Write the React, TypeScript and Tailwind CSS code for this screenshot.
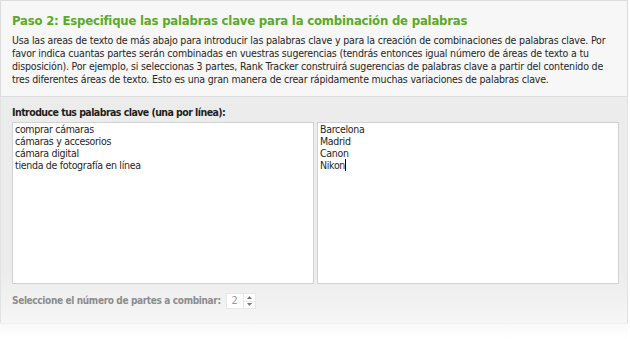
import React from "react";

export default function App() {
  return (
    <div className="w-[630px] h-[339px] overflow-hidden bg-white">
      <div className="w-[628px] h-[339px] flex flex-col text-[#262626] font-['DejaVu_Sans_Condensed','DejaVu_Sans',sans-serif]">
        <div className="h-[97px] shrink-0 bg-[#f7f7f7] border border-[#dcdcdc] pl-[11px] pt-[11px]">
          <div className="text-[13px] font-bold text-[#5aab27] leading-[18px] tracking-[-0.2px] whitespace-nowrap">
            Paso 2: Especifique las palabras clave para la combinación de palabras
          </div>
          <div className="mt-[4px] text-[10.5px] leading-[13px] tracking-[-0.18px] whitespace-nowrap">
            <div>Usa las areas de texto de más abajo para introducir las palabras clave y para la creación de combinaciones de palabras clave. Por</div>
            <div>favor indica cuantas partes serán combinadas en vuestras sugerencias (tendrás entonces igual número de áreas de texto a tu</div>
            <div>disposición). Por ejemplo, si seleccionas 3 partes, Rank Tracker construirá sugerencias de palabras clave a partir del contenido de</div>
            <div>tres diferentes áreas de texto. Esto es una gran manera de crear rápidamente muchas variaciones de palabras clave.</div>
          </div>
        </div>
        <div className="h-[226px] shrink-0 flex flex-col bg-[linear-gradient(to_bottom,#ececec_0%,#ececec_78%,#f6f6f6_100%)] border-l border-r border-[#e2e2e2] pl-[11px] pt-[8px]">
          <div className="text-[10.5px] font-bold leading-[14px] tracking-[-0.55px] whitespace-nowrap text-[#1e1e1e]">Introduce tus palabras clave (una por línea):</div>
          <div className="mt-[3px] flex gap-[3px]">
            <div className="w-[302px] h-[162px] bg-white border border-[#d2d2d2] pl-[2px] text-[10.5px] leading-[12px] tracking-[-0.3px]">
              <div>comprar cámaras</div>
              <div>cámaras y accesorios</div>
              <div>cámara digital</div>
              <div>tienda de fotografía en línea</div>
            </div>
            <div className="w-[302px] h-[162px] bg-white border border-[#d2d2d2] pl-[2px] text-[10.5px] leading-[12px] tracking-[-0.3px]">
              <div>Barcelona</div>
              <div>Madrid</div>
              <div>Canon</div>
              <div className="flex items-center">Nikon<span className="inline-block w-px h-[12px] bg-black"></span></div>
            </div>
          </div>
          <div className="mt-[9px] flex items-center gap-[5px]">
            <span className="text-[10px] font-bold text-[#8c8c8c] whitespace-nowrap leading-[14px] tracking-[-0.35px]">Seleccione el número de partes a combinar:</span>
            <div className="flex items-stretch h-[16px]">
              <div className="w-[18px] bg-white border border-[#e8e8e8] text-[11px] text-[#9a9a9a] flex items-center justify-center">2</div>
              <div className="w-[12px] flex flex-col">
                <div className="flex-1 bg-white border border-l-0 border-[#e8e8e8] flex items-center justify-center">
                  <svg width="5" height="3" viewBox="0 0 5 3"><path d="M2.5 0 L5 3 L0 3 Z" fill="#777" /></svg>
                </div>
                <div className="flex-1 bg-white border border-l-0 border-t-0 border-[#e8e8e8] flex items-center justify-center">
                  <svg width="5" height="3" viewBox="0 0 5 3"><path d="M0 0 L5 0 L2.5 3 Z" fill="#777" /></svg>
                </div>
              </div>
            </div>
          </div>
        </div>
        <div className="flex-1 bg-[linear-gradient(to_bottom,#f9f9f9,#ffffff)] border-t border-[#f0f0f0]"></div>
      </div>
    </div>
  );
}
